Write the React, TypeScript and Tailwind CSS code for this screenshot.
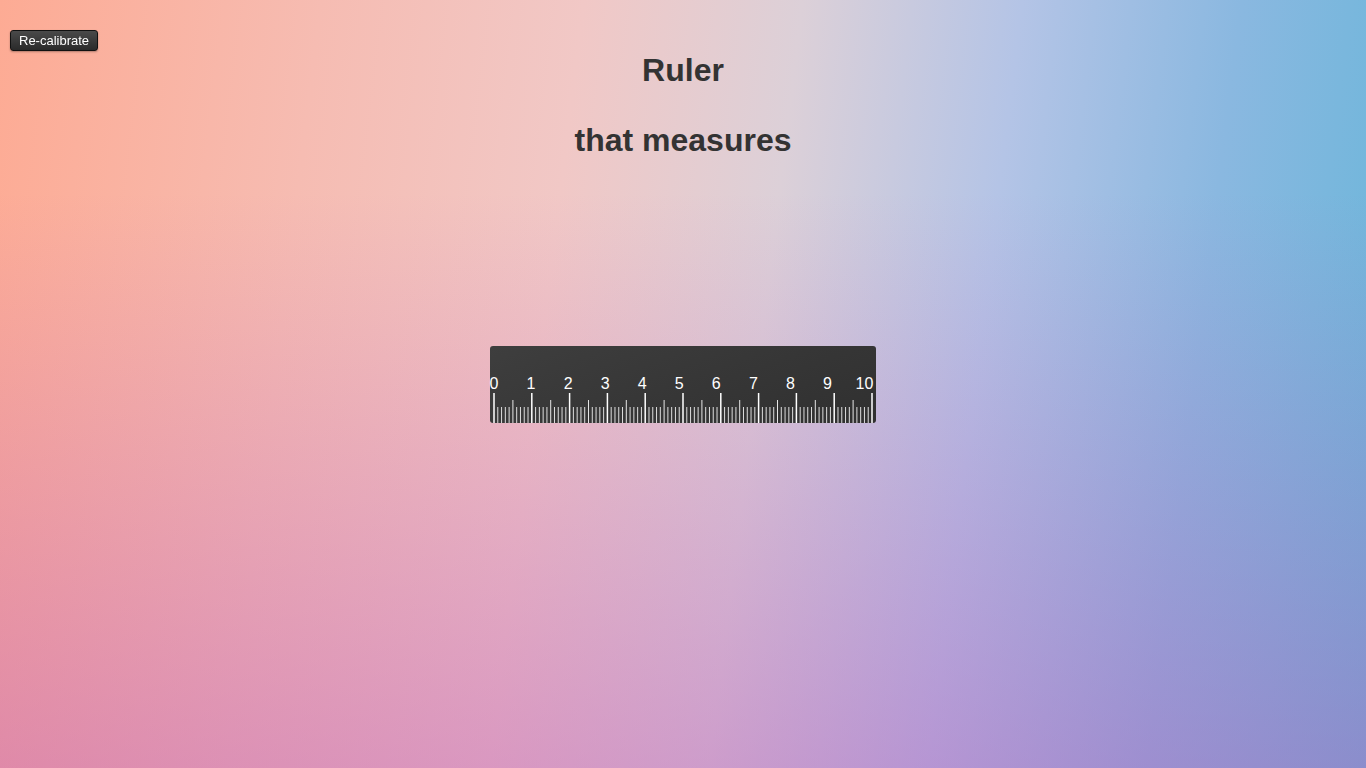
import React from "react";

const CM = 37.8;

function RulerTicks() {
  const ticks: React.ReactNode[] = [];
  for (let mm = 0; mm <= 100; mm++) {
    const x = 4 + (mm * CM) / 10;
    if (mm % 10 === 0) {
      ticks.push(<rect key={mm} x={x - 0.75} y={47} width={1.5} height={30} fill="#ffffff" />);
    } else if (mm % 5 === 0) {
      ticks.push(<rect key={mm} x={x - 0.5} y={54} width={1} height={23} fill="#e6e6e6" />);
    } else {
      ticks.push(<rect key={mm} x={x - 0.5} y={61} width={1} height={16} fill="#dcdcdc" />);
    }
  }
  return (
    <svg width="386" height="77" viewBox="0 0 386 77" className="block">
      {ticks}
    </svg>
  );
}

const labels = [0, 1, 2, 3, 4, 5, 6, 7, 8, 9, 10];

export default function App() {
  return (
    <div className="min-h-screen h-screen w-full overflow-hidden font-['Liberation_Sans',Arial,sans-serif] bg-[linear-gradient(to_bottom,rgba(190,90,180,0)_25%,rgba(185,85,185,0.42)_100%),linear-gradient(97deg,#fdab94_0%,#f6bcb2_22%,#f1c8c6_40%,#dcd0d8_55%,#b4c4e6_70%,#8ab8e0_85%,#6ab6da_100%)]">
      <button className="fixed left-[10px] top-[30px] h-[21px] px-[8px] rounded-[3px] border border-[#111] bg-[linear-gradient(#4a4a4a,#2a2a2a)] text-white text-[13px] leading-[15px] shadow-[0_1px_2px_rgba(0,0,0,0.3)]">
        Re-calibrate
      </button>

      <div className="flex flex-col items-center pt-[52px]">
        <h1 className="text-[32px] leading-[37px] font-bold text-[#333]">Ruler</h1>
        <h1 className="mt-[33px] text-[32px] leading-[37px] font-bold text-[#333]">that measures</h1>

        <div className="relative mt-[187px] w-[386px] h-[77px] rounded-[3px] bg-[linear-gradient(160deg,#3e3e3e_0%,#363636_55%,#303030_100%)]">
          <RulerTicks />
          {labels.map((n) => (
            <span
              key={n}
              className="absolute top-[29px] w-[30px] -ml-[15px] text-center text-white text-[16px] leading-[18px]"
              style={{ left: 4 + n * 37.05 }}
            >
              {n}
            </span>
          ))}
        </div>
      </div>
    </div>
  );
}
